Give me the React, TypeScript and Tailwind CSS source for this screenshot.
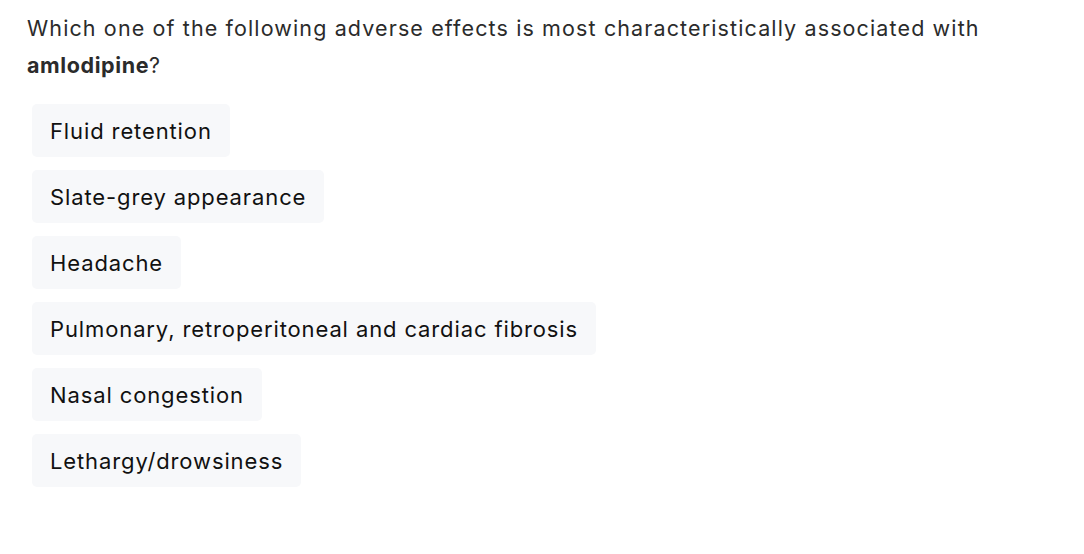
import React from "react";

const options = [
	"Fluid retention",
	"Slate-grey appearance",
	"Headache",
	"Pulmonary, retroperitoneal and cardiac fibrosis",
	"Nasal congestion",
	"Lethargy/drowsiness",
];

const App = () => {
	return (
		<div className="min-h-screen bg-white px-[27px] pt-[10px] font-['Inter',sans-serif]">
			<p className="max-w-[1000px] text-[21.5px] leading-[37px] tracking-[1.12px] text-[#2b2b2b]">
				Which one of the following adverse effects is most characteristically associated with <b className="font-bold tracking-[0.6px]">amlodipine</b>?
			</p>
			<div className="mt-[20px] flex flex-col items-start gap-[13px] pl-[5px]">
				{options.map((opt) => (
					<button
						key={opt}
						type="button"
						className="h-[53px] rounded-[5px] bg-[#f7f8fa] px-[18px] pt-[1px] text-[22px] tracking-[0.88px] text-[#111]"
					>
						{opt}
					</button>
				))}
			</div>
		</div>
	);
};

export default App;
